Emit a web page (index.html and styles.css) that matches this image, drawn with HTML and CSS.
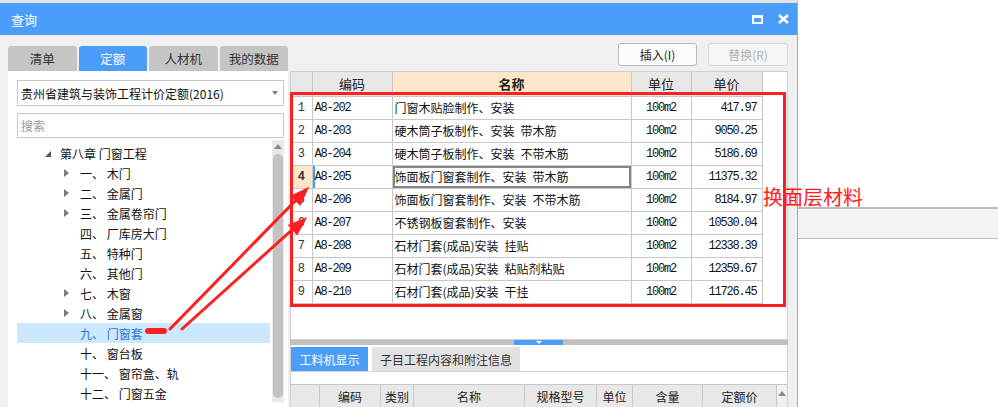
FILE: index.html
```html
<!DOCTYPE html>
<html lang="zh">
<head>
<meta charset="utf-8">
<title>查询</title>
<link rel="stylesheet" href="styles.css">
</head>
<body>
<div class="page">
  <div class="dialog">
    <div class="titlebar">
      <span class="title">查询</span>
      <div class="winbtns">
        <svg width="11" height="9" viewBox="0 0 11 9"><rect x="1" y="1.5" width="9" height="6.5" fill="none" stroke="#fff" stroke-width="2"/><rect x="0" y="0" width="11" height="3" fill="#fff"/></svg>
        <svg width="11" height="10" viewBox="0 0 11 10"><path d="M1 1 L10 9 M10 1 L1 9" stroke="#fff" stroke-width="2.6"/></svg>
      </div>
    </div>
    <div class="content">
      <div class="leftcol">
        <div class="tabs">
          <div class="tab">清单</div>
          <div class="tab active">定额</div>
          <div class="tab">人材机</div>
          <div class="tab">我的数据</div>
        </div>
        <div class="leftpanel">
          <div class="combo"><span>贵州省建筑与装饰工程计价定额(2016)</span><span class="caret"></span></div>
          <div class="search">搜索</div>
          <div class="treewrap">
            <ul class="tree">
              <li class="l0"><span class="exp"></span><span>第八章 门窗工程</span></li>
              <li class="l1"><span class="col"></span><span>一、 木门</span></li>
              <li class="l1"><span class="col"></span><span>二、 金属门</span></li>
              <li class="l1"><span class="col"></span><span>三、 金属卷帘门</span></li>
              <li class="l1"><span class="none"></span><span>四、 厂库房大门</span></li>
              <li class="l1"><span class="none"></span><span>五、 特种门</span></li>
              <li class="l1"><span class="none"></span><span>六、 其他门</span></li>
              <li class="l1"><span class="col"></span><span>七、 木窗</span></li>
              <li class="l1"><span class="col"></span><span>八、 金属窗</span></li>
              <li class="l1 sel"><span class="none"></span><span>九、 门窗套</span></li>
              <li class="l1"><span class="none"></span><span>十、 窗台板</span></li>
              <li class="l1"><span class="none"></span><span>十一、 窗帘盒、轨</span></li>
              <li class="l1"><span class="none"></span><span>十二、 门窗五金</span></li>
            </ul>
            <div class="vscroll"><span class="up"></span><span class="thumb"></span></div>
          </div>
        </div>
      </div>
      <div class="rightcol">
        <div class="btnrow">
          <div class="btn">插入(I)</div>
          <div class="btn dis">替换(R)</div>
        </div>
        <div class="gridbox">
          <table class="grid">
            <colgroup><col class="c1"><col class="c2"><col class="c3"><col class="c4"><col class="c5"></colgroup>
            <thead>
              <tr><th></th><th>编码</th><th class="hl">名称</th><th>单位</th><th>单价</th></tr>
            </thead>
            <tbody>
              <tr><td class="rn">1</td><td class="code">A8-202</td><td>门窗木贴脸制作、安装</td><td class="unit">100m2</td><td class="num">417.97</td></tr>
              <tr><td class="rn">2</td><td class="code">A8-203</td><td>硬木筒子板制作、安装&ensp;带木筋</td><td class="unit">100m2</td><td class="num">9050.25</td></tr>
              <tr><td class="rn">3</td><td class="code">A8-204</td><td>硬木筒子板制作、安装&ensp;不带木筋</td><td class="unit">100m2</td><td class="num">5186.69</td></tr>
              <tr class="cur"><td class="rn">4</td><td class="code">A8-205</td><td class="focus">饰面板门窗套制作、安装&ensp;带木筋</td><td class="unit">100m2</td><td class="num">11375.32</td></tr>
              <tr><td class="rn">5</td><td class="code">A8-206</td><td>饰面板门窗套制作、安装&ensp;不带木筋</td><td class="unit">100m2</td><td class="num">8184.97</td></tr>
              <tr><td class="rn">6</td><td class="code">A8-207</td><td>不锈钢板窗套制作、安装</td><td class="unit">100m2</td><td class="num">10530.04</td></tr>
              <tr><td class="rn">7</td><td class="code">A8-208</td><td>石材门套(成品)安装&ensp;挂贴</td><td class="unit">100m2</td><td class="num">12338.39</td></tr>
              <tr><td class="rn">8</td><td class="code">A8-209</td><td>石材门套(成品)安装&ensp;粘贴剂粘贴</td><td class="unit">100m2</td><td class="num">12359.67</td></tr>
              <tr><td class="rn">9</td><td class="code">A8-210</td><td>石材门套(成品)安装&ensp;干挂</td><td class="unit">100m2</td><td class="num">11726.45</td></tr>
            </tbody>
          </table>
        </div>
        <div class="splitter"><span class="handle"><span class="tri"></span></span></div>
        <div class="bottom">
          <div class="btabs">
            <div class="btab active">工料机显示</div>
            <div class="btab wide">子目工程内容和附注信息</div>
          </div>
          <div class="bspace"></div>
          <div class="bhead">
            <span class="b1"></span><span class="b2">编码</span><span class="b3">类别</span><span class="b4">名称</span><span class="b5">规格型号</span><span class="b6">单位</span><span class="b7">含量</span><span class="b8">定额价</span><span class="b9"><span class="up"></span></span>
          </div>
        </div>
      </div>
    </div>
  </div>
  <div class="side"><div class="strip"></div></div>
</div>

<div class="redbox"></div>
<div class="note">换面层材料</div>
<span class="pill"></span>
<svg class="arrows" width="998" height="407" viewBox="0 0 998 407">
  <g stroke="#ff1f1f" stroke-width="3" stroke-linecap="round" fill="#ff1f1f">
    <line x1="170" y1="329" x2="297" y2="199"/>
    <polygon points="306,190 299.8,203.5 292.6,196.5" />
    <line x1="182" y1="329" x2="294" y2="228"/>
    <polygon points="304,220 296.9,233 290.3,225.6" />
  </g>
</svg>
</body>
</html>
```

FILE: styles.css
```css
* { box-sizing: border-box; }

body {
  margin: 0;
  width: 998px;
  height: 407px;
  overflow: hidden;
  position: relative;
  background: #fff;
  font-family: "Noto Sans CJK SC", "Noto Sans", sans-serif;
  font-size: 12px;
  color: #222;
}

.page { display: flex; height: 407px; }

.dialog {
  width: 798px;
  height: 407px;
  flex: none;
  border-top: 3px solid #e2e2e2;
  border-right: 1px solid #a9a9a9;
  background: #f0f0f0;
  display: flex;
  flex-direction: column;
}

.titlebar {
  height: 32px;
  flex: none;
  background: #4a9ef9;
  color: #fff;
  display: flex;
  align-items: center;
  justify-content: space-between;
  padding: 0 8px 0 11px;
  font-size: 13px;
}
.winbtns { display: flex; gap: 15px; align-items: center; }
.winbtns svg { display: block; }

.content {
  flex: 1;
  display: flex;
  gap: 2px;
  padding-left: 8px;
  min-height: 0;
}

/* left column */
.leftcol { width: 280px; display: flex; flex-direction: column; }
.tabs { display: flex; gap: 2px; margin-top: 11px; height: 25px; flex: none; }
.tab {
  width: 78px;
  background: #c5c5c5;
  border-radius: 3px 3px 0 0;
  display: flex;
  align-items: center;
  justify-content: center;
  color: #333;
  font-size: 12.5px;
}
.tab.active { background: #4a9ef9; color: #fff; }

.leftpanel {
  flex: 1;
  background: #fff;
  padding: 9px 4px 0 9px;
  min-height: 0;
}
.combo {
  height: 26px;
  border: 1px solid #c9c9c9;
  display: flex;
  align-items: center;
  padding-left: 3px;
  color: #111;
}
.caret {
  margin-left: auto;
  margin-right: 5px;
  width: 0; height: 0;
  border-left: 3.5px solid transparent;
  border-right: 3.5px solid transparent;
  border-top: 4px solid #808080;
}
.search {
  margin-top: 7px;
  height: 25px;
  border: 1px solid #c9c9c9;
  color: #9a9a9a;
  padding-left: 3px;
  display: flex;
  align-items: center;
}

.treewrap { margin-top: 2px; display: flex; height: 262px; }
.tree { flex: 1; list-style: none; margin: 0; padding: 3px 0 0; }
.tree li { height: 20px; display: flex; align-items: center; white-space: pre; color: #111; }
.tree .l0 { padding-left: 28px; }
.tree .l1 { padding-left: 47px; }
.tree .l0 .exp {
  width: 0; height: 0;
  border-left: 6px solid transparent;
  border-bottom: 6px solid #555;
  margin-right: 9px;
  margin-top: 2px;
}
.tree .col {
  width: 0; height: 0;
  border-top: 4px solid transparent;
  border-bottom: 4px solid transparent;
  border-left: 5px solid #7a7a7a;
  margin-right: 11px;
}
.tree .none { width: 5px; margin-right: 11px; }
.tree li.sel { background: #cce8ff; color: #2b78d0; }

.vscroll {
  width: 12px;
  margin-left: 2px;
  background: #e9e9e9;
  display: flex;
  flex-direction: column;
  align-items: center;
  padding: 4px 0 4px;
}
.vscroll .up {
  width: 0; height: 0;
  border-left: 4px solid transparent;
  border-right: 4px solid transparent;
  border-bottom: 5px solid #8a8a8a;
  margin-bottom: 5px;
}
.vscroll .thumb { flex: 1; width: 10px; background: #c2c2c2; border-radius: 5px; }

/* right column */
.rightcol { width: 498px; display: flex; flex-direction: column; }
.btnrow {
  height: 36px;
  flex: none;
  padding-top: 8px;
  display: flex;
  justify-content: flex-end;
  gap: 11px;
}
.btn {
  width: 79px;
  height: 23px;
  border: 1px solid #bababa;
  border-radius: 3px;
  background: #fbfbfb;
  display: flex;
  align-items: center;
  justify-content: center;
  color: #222;
}
.btn.dis { width: 80px; color: #b2b2b2; border-color: #d8d8d8; background: #f5f5f5; }

.gridbox {
  height: 269px;
  flex: none;
  background: #fff;
  border: 1px solid #cfcfcf;
}
.grid {
  border-collapse: collapse;
  table-layout: fixed;
  width: 471px;
}
.grid .c1 { width: 21px; }
.grid .c2 { width: 80px; }
.grid .c3 { width: 239px; }
.grid .c4 { width: 60px; }
.grid .c5 { width: 71px; }
.grid th {
  height: 24px;
  background: #e8e8e8;
  border: 1px solid #c8c8c8;
  border-top: none;
  font-weight: normal;
  font-size: 13px;
  padding: 0;
  color: #222;
}
.grid th:first-child { border-left: none; }
.grid th.hl { background: #fde6c9; font-weight: bold; }
.grid td {
  height: 23px;
  border: 1px solid #c8c8c8;
  padding: 0 2px;
  white-space: nowrap;
  overflow: hidden;
  color: #111;
}
.grid td:first-child { border-left: none; }
.grid td.rn {
  text-align: center;
  font-family: "Liberation Mono", monospace;
  font-size: 12px;
  color: #333;
  padding: 0;
}
.grid td.code, .grid td.unit, .grid td.num {
  font-family: "Liberation Mono", monospace;
  font-size: 12px;
  letter-spacing: -1.2px;
}
.grid td.unit { text-align: center; }
.grid td.num { text-align: right; padding-right: 5px; }
.grid tr.cur td.rn { background: #fde6c9; font-weight: bold; }
.grid tr.cur td.code { box-shadow: inset 2px 0 0 #4a9ef9; }
.grid td.focus { box-shadow: inset 0 0 0 2px #858585; }

.splitter { height: 5px; flex: none; background: #c0c0c0; display: flex; }
.handle {
  margin-left: 224px;
  width: 49px;
  background: #4a9ef9;
  display: flex;
  justify-content: center;
  padding-top: 1px;
}
.handle .tri {
  width: 0; height: 0;
  border-left: 3px solid transparent;
  border-right: 3px solid transparent;
  border-top: 3px solid #fff;
}

.bottom {
  flex: 1;
  background: #fff;
  border: 1px solid #cfcfcf;
  border-top: none;
  padding-top: 2px;
  min-height: 0;
}
.btabs { display: flex; gap: 4px; height: 25px; border-bottom: 1px solid #d2d2d2; }
.btab {
  width: 77px;
  height: 24px;
  background: #e2e2e2;
  display: flex;
  align-items: center;
  justify-content: center;
  color: #333;
}
.btab.active { background: #4a9ef9; color: #fff; }
.btab.wide { width: 148px; }
.bspace { height: 12px; }
.bhead {
  display: flex;
  height: 23px;
  background: #e8e8e8;
  border-top: 1px solid #c8c8c8;
}
.bhead > span {
  display: flex;
  align-items: center;
  justify-content: center;
  border-right: 1px solid #c8c8c8;
  color: #222;
}
.bhead .b1 { width: 29px; }
.bhead .b2 { width: 61px; }
.bhead .b3 { width: 33px; }
.bhead .b4 { width: 111px; }
.bhead .b5 { width: 72px; }
.bhead .b6 { width: 36px; }
.bhead .b7 { width: 70px; }
.bhead .b8 { width: 74px; }
.bhead .b9 { flex: 1; border-right: none; background: #f0f0f0; align-items: flex-start; padding-top: 6px; }
.bhead .b9 .up {
  width: 0; height: 0;
  border-left: 4px solid transparent;
  border-right: 4px solid transparent;
  border-bottom: 5px solid #8a8a8a;
}

/* outside area */
.side { flex: 1; padding-top: 207px; }
.strip {
  height: 32px;
  border-top: 2px solid #bdbdbd;
  border-bottom: 1px solid #bdbdbd;
  background: #f3f3f3;
}

/* annotations (overlay) */
.redbox {
  position: absolute;
  left: 290px;
  top: 92px;
  width: 496px;
  height: 215px;
  border: 3px solid #ff1f1f;
}
.note {
  position: absolute;
  left: 763px;
  top: 185px;
  font-size: 20px;
  line-height: 24px;
  color: #ff2020;
}
.pill {
  position: absolute;
  left: 145px;
  top: 328px;
  width: 22px;
  height: 6px;
  border-radius: 3px;
  background: #ff1f1f;
}
.arrows { position: absolute; left: 0; top: 0; pointer-events: none; }
```
